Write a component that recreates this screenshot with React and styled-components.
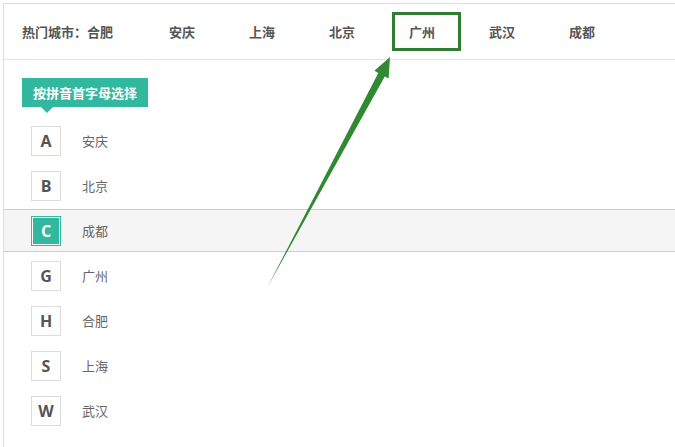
import React from 'react'
import styled, { createGlobalStyle } from 'styled-components'

const GlobalStyle = createGlobalStyle`
  html, body {
    margin: 0;
    padding: 0;
    background: #fff;
  }
  body {
    font-family: "Noto Sans CJK SC", "Open Sans", sans-serif;
  }
`

const Page = styled.div`
  position: relative;
  width: 675px;
  height: 447px;
  padding: 3px 0 0 3px;
  box-sizing: border-box;
  overflow: hidden;
`

const Panel = styled.div`
  border-top: 1px solid #dedede;
  border-left: 1px solid #dedede;
  height: 100%;
`

const HotBar = styled.div`
  display: flex;
  align-items: center;
  height: 55px;
  padding-left: 18px;
  border-bottom: 1px solid #e2e2e2;
  font-size: 13px;
  font-weight: 700;
  color: #555;
`

const HotTitle = styled.span`
  margin-right: 56px;
  white-space: nowrap;
`

const HotCity = styled.span`
  width: 24px;
  margin-right: 56px;
  white-space: nowrap;
`

const Tag = styled.div`
  position: relative;
  display: inline-flex;
  align-items: center;
  height: 29px;
  margin: 18px 0 0 18px;
  padding: 0 11px;
  background: #32b89f;
  color: #fff;
  font-size: 13px;
  font-weight: 700;
  white-space: nowrap;

  &::after {
    content: '';
    position: absolute;
    left: 19px;
    bottom: -6px;
    border-left: 6px solid transparent;
    border-right: 6px solid transparent;
    border-top: 6px solid #32b89f;
  }
`

const List = styled.div`
  margin-top: 12px;
`

const Row = styled.div`
  display: flex;
  align-items: center;
  height: 43px;
  margin-top: 2px;
  padding-left: 27px;
  box-sizing: border-box;
  background: ${({ $active }) => ($active ? '#f5f5f5' : 'transparent')};
  border-top: 1px solid ${({ $active }) => ($active ? '#cfcfcf' : 'transparent')};
  border-bottom: 1px solid ${({ $active }) => ($active ? '#cfcfcf' : 'transparent')};
`

const Letter = styled.span`
  display: flex;
  align-items: center;
  justify-content: center;
  width: 30px;
  height: 30px;
  box-sizing: border-box;
  border: 1px solid ${({ $active }) => ($active ? '#32b89f' : '#dcdcdc')};
  background: ${({ $active }) => ($active ? '#32b89f' : '#fff')};
  box-shadow: ${({ $active }) => ($active ? 'inset 0 0 0 1px #fff' : 'none')};
  color: ${({ $active }) => ($active ? '#fff' : '#555')};
  font-family: "Open Sans", "Liberation Sans", sans-serif;
  font-size: 16px;
  font-weight: 700;
`

const CityName = styled.span`
  margin-left: 21px;
  font-size: 13px;
  color: #666;
`

const Overlay = styled.svg`
  position: absolute;
  left: 0;
  top: 0;
  pointer-events: none;
`

const hotCities = ['安庆', '上海', '北京', '广州', '武汉', '成都']

const letters = [
  { key: 'A', city: '安庆' },
  { key: 'B', city: '北京' },
  { key: 'C', city: '成都', active: true },
  { key: 'G', city: '广州' },
  { key: 'H', city: '合肥' },
  { key: 'S', city: '上海' },
  { key: 'W', city: '武汉' },
]

export default function App() {
  return (
    <>
      <GlobalStyle />
      <Page>
        <Panel>
          <HotBar>
            <HotTitle>热门城市：合肥</HotTitle>
            {hotCities.map(c => (
              <HotCity key={c}>{c}</HotCity>
            ))}
          </HotBar>
          <Tag>按拼音首字母选择</Tag>
          <List>
            {letters.map(item => (
              <Row key={item.key} $active={item.active}>
                <Letter $active={item.active}>{item.key}</Letter>
                <CityName>{item.city}</CityName>
              </Row>
            ))}
          </List>
        </Panel>
        {/* annotation: box around 广州 and the pointing arrow */}
        <Overlay width="675" height="447" viewBox="0 0 675 447">
          <rect x="393.5" y="13.5" width="66" height="36" fill="none" stroke="#2f7d33" strokeWidth="3" />
          <polygon
            points="390,57 388.6,78.5 384.8,76.4 267,288 378.3,73 374.4,70.8"
            fill="#318a32"
          />
        </Overlay>
      </Page>
    </>
  )
}
